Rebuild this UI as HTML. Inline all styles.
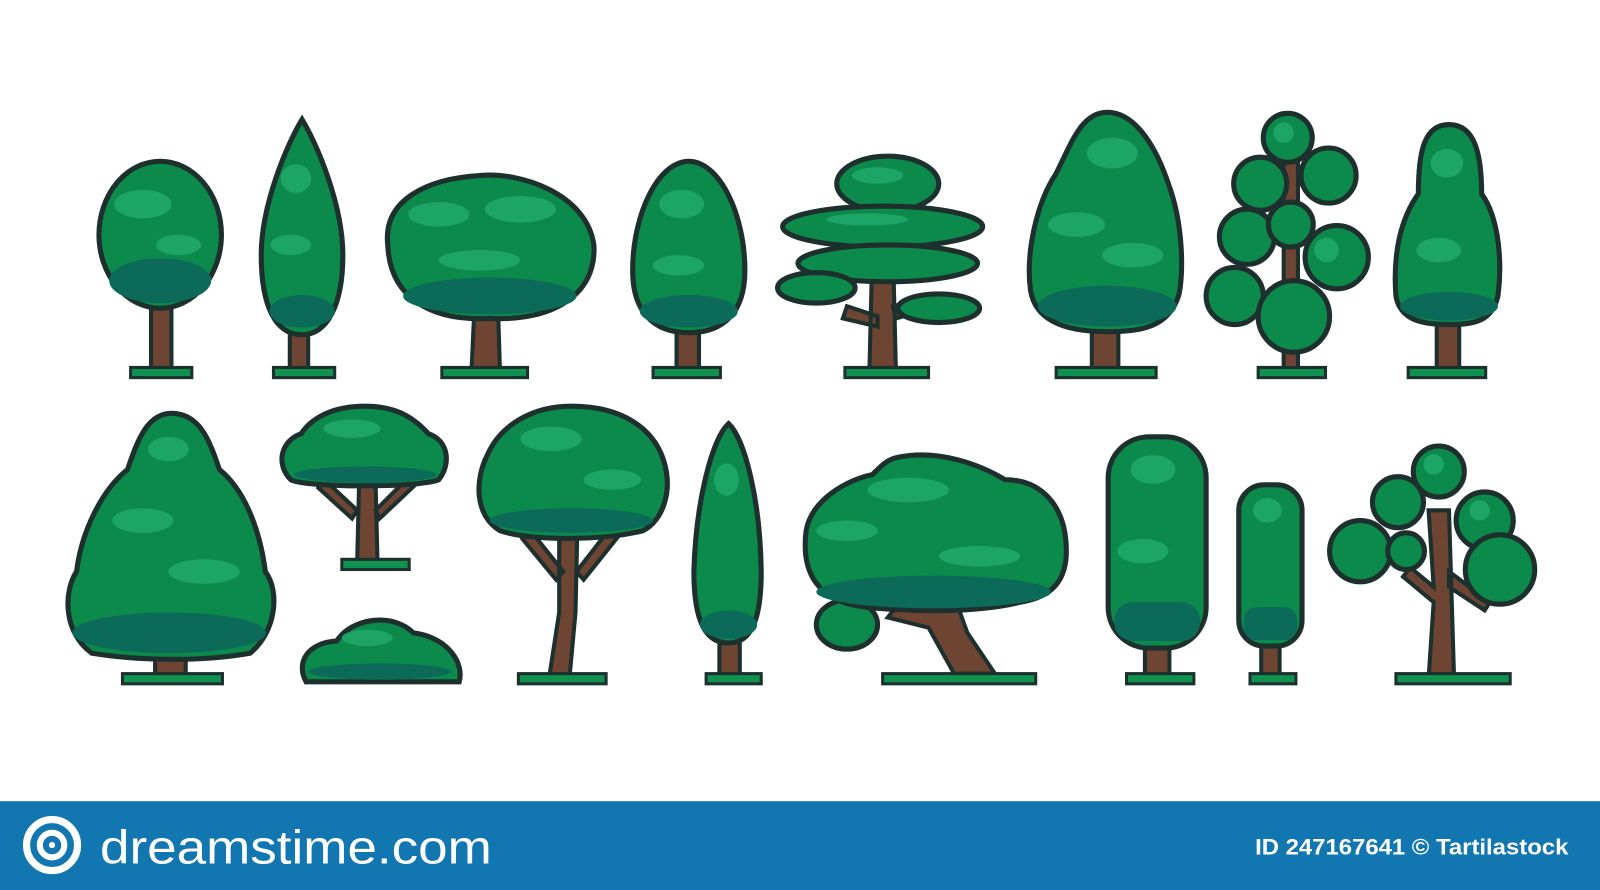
<!DOCTYPE html>
<html><head><style>
html,body{margin:0;padding:0;background:#fff;}
svg{display:block}
</style></head><body>
<svg width="1600" height="890" viewBox="0 0 1568 872" preserveAspectRatio="none" xmlns="http://www.w3.org/2000/svg">
<defs>
<style>
.c{fill:#0c8a4c;stroke:#1e302e;stroke-width:5}
.l{fill:#1ca565}
.d{fill:#0b6b58}
.t{fill:#6e4533;stroke:#1e302e;stroke-width:4}
.g{fill:#0f9250;stroke:#1e302e;stroke-width:3}
</style>
</defs>
<rect width="1568" height="872" fill="#fff"/>
<!-- Row 1 -->
<rect class="t" x="148" y="290" width="20" height="75"/>
<rect class="g" x="128" y="360" width="60" height="10"/>
<ellipse class="c" cx="157" cy="230" rx="60" ry="72"/>
<ellipse class="d" cx="157" cy="275" rx="50" ry="22"/>
<ellipse class="l" cx="140" cy="200" rx="28" ry="14"/>
<ellipse class="l" cx="175" cy="240" rx="22" ry="10"/>
<rect class="t" x="284" y="320" width="18" height="45"/>
<rect class="g" x="268" y="360" width="60" height="10"/>
<path class="c" d="M296 117 C310 140 336 200 336 250 C336 300 320 328 296 328 C270 328 256 300 256 250 C256 200 282 140 296 117Z"/>
<ellipse class="d" cx="296" cy="305" rx="32" ry="16"/>
<ellipse class="l" cx="290" cy="175" rx="15" ry="14"/>
<ellipse class="l" cx="285" cy="240" rx="20" ry="10"/>
<path class="t" d="M465 300 L488 300 L490 365 L462 365Z"/>
<rect class="g" x="433" y="360" width="84" height="10"/>
<path class="c" d="M380 240 C375 195 420 175 470 172 C510 168 575 190 582 240 C585 290 540 315 480 312 C420 315 382 290 380 240Z"/>
<ellipse class="d" cx="480" cy="290" rx="85" ry="18"/>
<ellipse class="l" cx="430" cy="210" rx="30" ry="12"/>
<ellipse class="l" cx="510" cy="205" rx="35" ry="13"/>
<ellipse class="l" cx="470" cy="255" rx="40" ry="10"/>
<rect class="t" x="663" y="315" width="22" height="50"/>
<rect class="g" x="640" y="360" width="66" height="10"/>
<path class="c" d="M675 158 C705 158 730 210 730 265 C730 305 710 326 675 326 C640 326 620 305 620 265 C620 210 645 158 675 158Z"/>
<ellipse class="d" cx="675" cy="305" rx="48" ry="16"/>
<ellipse class="l" cx="668" cy="200" rx="22" ry="14"/>
<ellipse class="l" cx="665" cy="260" rx="25" ry="10"/>
<path class="t" d="M855 240 L875 240 L878 365 L852 365Z M830 300 L860 310 L860 320 L826 312Z M875 300 L920 290 L920 300 L878 312Z"/>
<rect class="g" x="828" y="360" width="82" height="10"/>
<ellipse class="c" cx="870" cy="180" rx="50" ry="27"/>
<ellipse class="c" cx="865" cy="222" rx="98" ry="20"/>
<ellipse class="c" cx="870" cy="258" rx="88" ry="18"/>
<ellipse class="c" cx="800" cy="282" rx="38" ry="15"/>
<ellipse class="c" cx="920" cy="302" rx="40" ry="14"/>
<ellipse class="l" cx="860" cy="172" rx="25" ry="8"/>
<ellipse class="l" cx="850" cy="215" rx="40" ry="6"/>
<rect class="t" x="1070" y="310" width="26" height="55"/>
<rect class="g" x="1035" y="360" width="98" height="10"/>
<path class="c" d="M1085 110 C1115 110 1135 150 1145 180 C1160 220 1160 270 1155 290 C1145 320 1120 325 1085 325 C1045 325 1015 315 1010 285 C1005 250 1015 200 1035 170 C1050 140 1060 110 1085 110Z"/>
<ellipse class="d" cx="1085" cy="300" rx="68" ry="20"/>
<ellipse class="l" cx="1090" cy="150" rx="25" ry="15"/>
<ellipse class="l" cx="1055" cy="220" rx="28" ry="12"/>
<ellipse class="l" cx="1110" cy="250" rx="30" ry="12"/>
<rect class="t" x="1258" y="150" width="14" height="215"/>
<rect class="g" x="1233" y="360" width="66" height="10"/>
<circle class="c" cx="1262" cy="135" r="24"/>
<circle class="c" cx="1235" cy="180" r="26"/>
<circle class="c" cx="1302" cy="172" r="27"/>
<circle class="c" cx="1222" cy="232" r="27"/>
<circle class="c" cx="1310" cy="252" r="31"/>
<circle class="c" cx="1265" cy="220" r="22"/>
<circle class="c" cx="1210" cy="290" r="28"/>
<circle class="c" cx="1268" cy="310" r="35"/>
<circle class="l" cx="1258" cy="130" r="10"/>
<circle class="l" cx="1300" cy="245" r="12"/>
<rect class="t" x="1408" y="305" width="22" height="60"/>
<rect class="g" x="1380" y="360" width="76" height="10"/>
<path class="c" d="M1420 122 C1445 122 1452 150 1452 190 C1470 215 1472 260 1468 290 C1462 315 1445 318 1420 318 C1390 318 1372 312 1368 290 C1365 250 1372 215 1390 190 C1390 150 1395 122 1420 122Z"/>
<ellipse class="d" cx="1420" cy="300" rx="48" ry="14"/>
<ellipse class="l" cx="1418" cy="160" rx="16" ry="14"/>
<ellipse class="l" cx="1410" cy="245" rx="22" ry="12"/>
<!-- Row 2 -->
<rect class="t" x="152" y="620" width="30" height="45"/>
<rect class="g" x="120" y="660" width="98" height="10"/>
<path class="c" d="M168 405 C195 405 205 430 215 460 C240 480 255 520 260 560 C275 580 270 620 245 640 C200 648 140 648 90 640 C62 620 62 580 75 560 C80 520 100 480 125 460 C135 430 145 405 168 405Z"/>
<ellipse class="d" cx="166" cy="620" rx="95" ry="20"/>
<ellipse class="l" cx="165" cy="440" rx="20" ry="12"/>
<ellipse class="l" cx="140" cy="510" rx="30" ry="12"/>
<ellipse class="l" cx="200" cy="560" rx="35" ry="12"/>
<path class="t" d="M352 470 L368 470 L370 552 L350 552Z M318 470 L350 500 L345 508 L312 478Z M400 468 L368 500 L372 508 L406 476Z"/>
<rect class="g" x="335" y="548" width="66" height="10"/>
<path class="c" d="M358 398 C395 398 410 415 420 425 C440 432 442 455 430 470 C410 478 300 478 285 470 C270 455 275 432 295 425 C305 410 325 398 358 398Z"/>
<ellipse class="l" cx="345" cy="420" rx="28" ry="9"/>
<ellipse class="d" cx="358" cy="465" rx="70" ry="8"/>
<path class="c" d="M300 668 C290 650 300 630 330 628 C345 605 385 600 405 620 C440 625 455 650 450 668Z"/>
<ellipse class="l" cx="360" cy="625" rx="25" ry="8"/>
<ellipse class="d" cx="372" cy="658" rx="70" ry="8"/>
<path class="t" d="M548 510 L566 510 L564 600 L558 665 L538 665 L548 600Z M520 520 L552 560 L545 568 L512 528Z M600 515 L565 560 L572 568 L608 523Z"/>
<rect class="g" x="508" y="660" width="86" height="10"/>
<path class="c" d="M560 398 C610 398 640 420 650 450 C660 480 650 510 630 520 C590 530 520 530 490 520 C465 505 465 470 478 445 C490 418 520 398 560 398Z"/>
<ellipse class="d" cx="560" cy="510" rx="80" ry="12"/>
<ellipse class="l" cx="540" cy="430" rx="30" ry="12"/>
<ellipse class="l" cx="600" cy="470" rx="28" ry="10"/>
<rect class="t" x="705" y="620" width="20" height="45"/>
<rect class="g" x="692" y="660" width="54" height="10"/>
<path class="c" d="M714 415 C730 430 745 490 746 560 C746 610 735 630 714 630 C692 630 680 610 680 560 C682 490 698 430 714 415Z"/>
<ellipse class="d" cx="714" cy="612" rx="28" ry="14"/>
<ellipse class="l" cx="712" cy="470" rx="12" ry="16"/>
<path class="t" d="M890 580 L930 570 L948 620 L975 660 L935 660 L910 615 L870 605Z"/>
<rect class="g" x="865" y="660" width="150" height="10"/>
<ellipse class="c" cx="830" cy="612" rx="30" ry="24"/>
<path class="c" d="M880 448 C920 440 960 455 985 470 C1020 470 1045 495 1045 540 C1045 570 1030 585 1000 590 C960 600 900 600 850 595 C800 590 785 560 790 520 C795 490 830 470 855 465 C865 455 870 450 880 448Z"/>
<ellipse class="d" cx="915" cy="580" rx="115" ry="16"/>
<ellipse class="l" cx="890" cy="480" rx="40" ry="12"/>
<ellipse class="l" cx="830" cy="520" rx="30" ry="10"/>
<ellipse class="l" cx="960" cy="545" rx="40" ry="10"/>
<rect class="t" x="1122" y="625" width="24" height="40"/>
<rect class="g" x="1104" y="660" width="66" height="10"/>
<rect class="c" x="1086" y="428" width="96" height="207" rx="40"/>
<rect class="d" x="1092" y="590" width="84" height="38" rx="18"/>
<ellipse class="l" cx="1130" cy="460" rx="22" ry="14"/>
<ellipse class="l" cx="1120" cy="540" rx="25" ry="12"/>
<rect class="t" x="1236" y="625" width="18" height="40"/>
<rect class="g" x="1225" y="660" width="45" height="10"/>
<rect class="c" x="1214" y="475" width="62" height="158" rx="25"/>
<rect class="d" x="1219" y="595" width="52" height="32" rx="12"/>
<ellipse class="l" cx="1242" cy="500" rx="14" ry="12"/>
<path class="t" d="M1400 500 L1420 500 L1425 665 L1400 665 L1405 590 L1375 565 L1382 556 L1405 575Z M1420 560 L1460 590 L1455 598 L1420 575Z"/>
<rect class="g" x="1368" y="660" width="112" height="10"/>
<circle class="c" cx="1410" cy="462" r="25"/>
<circle class="c" cx="1370" cy="492" r="25"/>
<circle class="c" cx="1455" cy="510" r="28"/>
<circle class="c" cx="1333" cy="540" r="30"/>
<circle class="c" cx="1378" cy="540" r="18"/>
<circle class="c" cx="1470" cy="558" r="34"/>
<circle class="l" cx="1405" cy="455" r="10"/>
<circle class="l" cx="1450" cy="500" r="10"/>
<!-- bar -->
<rect x="0" y="785" width="1568" height="87" fill="#1277b0"/>
<circle cx="51" cy="828" r="25" fill="none" stroke="#fff" stroke-width="7"/>
<circle cx="51" cy="828" r="12" fill="none" stroke="#fff" stroke-width="6"/>
<circle cx="51" cy="828" r="3" fill="#fff"/>
<text x="98" y="846" font-family="Liberation Sans, sans-serif" font-size="46" fill="#fff" textLength="384" lengthAdjust="spacingAndGlyphs">dreamstime.com</text>
<text x="1230" y="837" font-family="Liberation Sans, sans-serif" font-weight="bold" font-size="22" fill="#fff" textLength="307" lengthAdjust="spacingAndGlyphs">ID 247167641 © Tartilastock</text>
</svg>
</body></html>
